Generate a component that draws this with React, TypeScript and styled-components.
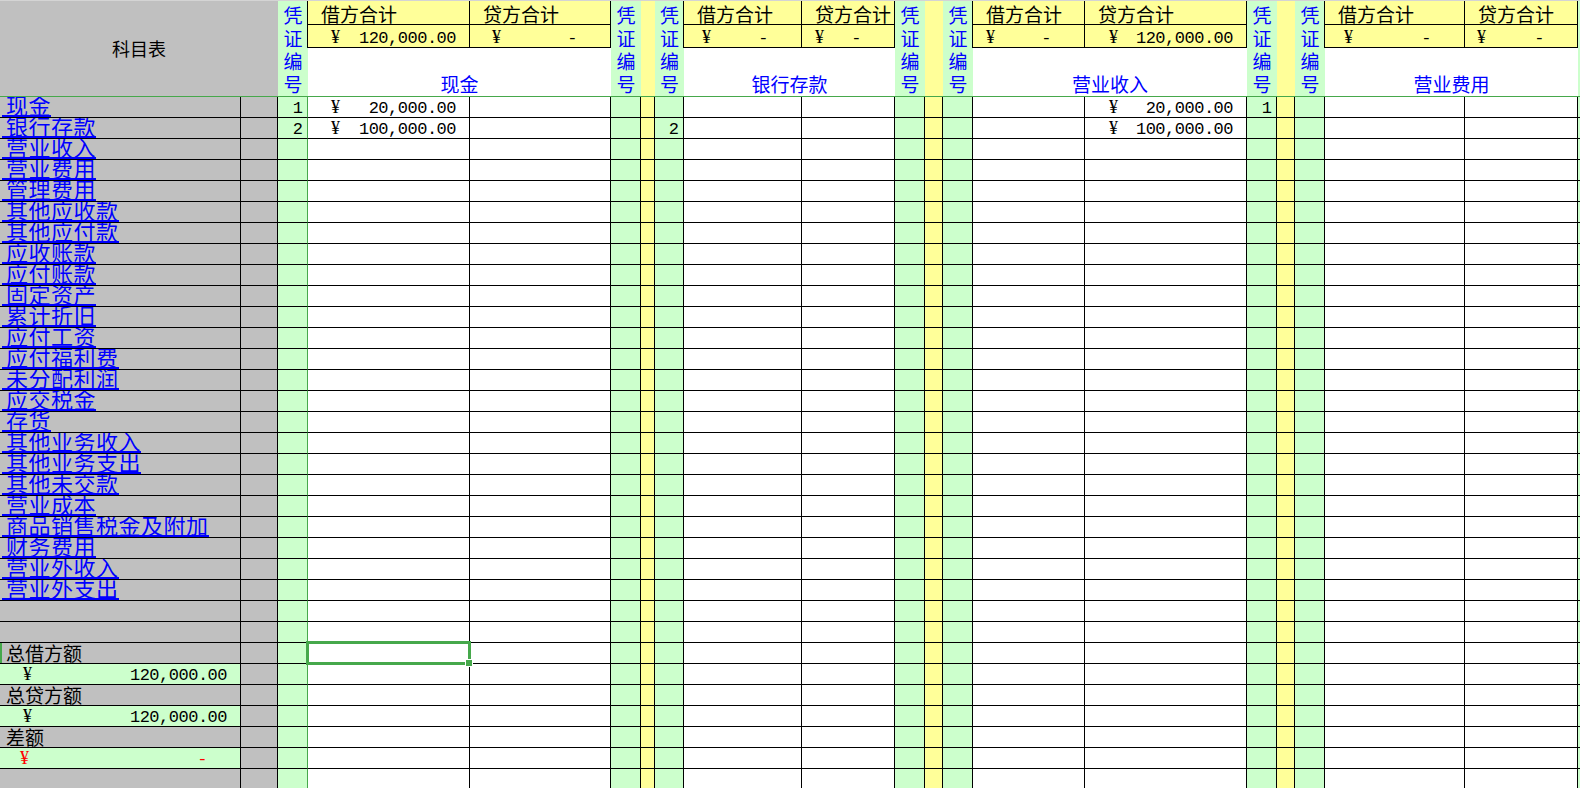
import React from "react";
import styled, { createGlobalStyle, css } from "styled-components";

const C = {
  gray: "#c0c0c0",
  green: "#ccffcc",
  yellow: "#ffff99",
  white: "#ffffff",
  line: "#000000",
  freeze: "#46a84b",
  blue: "#0000ff",
  red: "#ff0000",
  top: "#d4d4d4",
};

const CJK = `"Noto Sans CJK SC", "Noto Sans", sans-serif`;
const NUM = `"Liberation Mono", "Noto Sans CJK SC", monospace`;
const YEN = `"Liberation Serif", "Noto Sans CJK SC", serif`;

const GlobalStyle = createGlobalStyle`
  html, body { margin: 0; padding: 0; background: #ffffff; overflow: hidden; }
  body { font-family: ${CJK}; color: #000; }
`;

const COLS = [241, 37, 30, 162, 141, 30, 14, 29, 118, 93, 30, 18, 30, 112, 162, 30, 18, 30, 140, 113];
const colTemplate = COLS.map((w) => `${w}px`).join(" ") + " 1fr";

type Kind = "gray" | "green" | "yellow" | "white";
const KIND_BG: Record<Kind, string> = { gray: C.gray, green: C.green, yellow: C.yellow, white: C.white };

const BODY_KINDS: Kind[] = [
  "gray", "gray",
  "green", "white", "white", "green", "yellow",
  "green", "white", "white", "green", "yellow",
  "green", "white", "white", "green", "yellow",
  "green", "white", "white", "green",
];

const Page = styled.div`
  width: 1580px;
  height: 788px;
  overflow: hidden;
  border-top: 1px solid ${C.top};
  box-sizing: border-box;
  display: flex;
  flex-direction: column;
`;

const HeaderGrid = styled.div`
  display: grid;
  grid-template-columns: ${colTemplate};
  grid-template-rows: 24px 23px 49px;
  flex: none;
`;

const Row = styled.div`
  display: grid;
  grid-template-columns: ${colTemplate};
  height: 21px;
  flex: none;
`;

type Place = { $c: number; $cs?: number; $r: number; $rs?: number; $bg: string };

const HCell = styled.div<Place>`
  grid-column: ${(p) => p.$c} / span ${(p) => p.$cs ?? 1};
  grid-row: ${(p) => p.$r} / span ${(p) => p.$rs ?? 1};
  background: ${(p) => p.$bg};
  box-sizing: border-box;
  min-width: 0;
  display: flex;
`;

const TitleCell = styled(HCell)`
  border-bottom: 1px solid ${C.freeze};
  align-items: center;
  justify-content: center;
  font-size: 18px;
  line-height: 20px;
  padding-bottom: 2px;
`;

const VoucherHead = styled(HCell)`
  border-bottom: 1px solid ${C.freeze};
  align-items: center;
  justify-content: center;
  overflow: hidden;
`;

const VoucherLabel = styled.div`
  width: 20px;
  font-size: 19px;
  line-height: 23px;
  color: ${C.blue};
  text-align: center;
  word-break: break-all;
`;

const SpacerHead = styled(HCell)`
  border-bottom: 1px solid ${C.freeze};
`;

const TotalCell = styled(HCell)<{ $first?: boolean; $selTop?: boolean }>`
  border-right: 1px solid ${C.line};
  border-bottom: 1px solid ${C.line};
  align-items: flex-end;
  ${(p) =>
    p.$first &&
    css`
      margin-left: -1px;
      border-left: 1px solid ${C.line};
    `}
  ${(p) => p.$selTop && css`box-shadow: 0 -1px 0 ${C.freeze};`}
`;

const TotalLabel = styled.span`
  padding-left: 13px;
  font-size: 19px;
  line-height: 20px;
  white-space: nowrap;
`;

const NameCell = styled(HCell)`
  border-bottom: 1px solid ${C.freeze};
  align-items: flex-end;
  justify-content: center;
  padding-bottom: 2px;
  font-size: 19px;
  line-height: 20px;
  color: ${C.blue};
`;

const Amount = styled.div<{ $lead: number; $trail: number; $color?: string }>`
  flex: 1;
  min-width: 0;
  display: flex;
  justify-content: space-between;
  align-items: baseline;
  padding: 0 ${(p) => p.$trail}px 0 ${(p) => p.$lead}px;
  font-family: ${NUM};
  font-size: 17px;
  line-height: 16px;
  letter-spacing: -0.5px;
  color: ${(p) => p.$color ?? "#000"};
  white-space: pre;
`;

const Yen = styled.span`
  font-family: ${YEN};
  font-size: 18px;
  line-height: 16px;
  letter-spacing: 0;
`;

const BodyCell = styled.div<{ $bg: string; $edge: string | null; $sel?: boolean; $mark?: boolean; $clip?: boolean }>`
  box-sizing: border-box;
  min-width: 0;
  background: ${(p) => p.$bg};
  border-bottom: 1px solid ${C.line};
  ${(p) => p.$edge && css`border-right: 1px solid ${p.$edge};`}
  display: flex;
  align-items: flex-end;
  overflow: ${(p) => (p.$clip ? "hidden" : "visible")};
  position: ${(p) => (p.$sel ? "relative" : "static")};
  ${(p) => p.$mark && css`box-shadow: inset 2px 0 0 ${C.freeze};`}
`;

const AccountLink = styled.a`
  display: block;
  height: 18px;
  margin-left: 2px;
  padding-left: 4px;
  font-size: 22px;
  line-height: 14px;
  letter-spacing: 0.5px;
  color: ${C.blue};
  text-decoration: none;
  border-bottom: 2px solid ${C.blue};
  white-space: nowrap;
`;

const SumLabel = styled.span`
  padding-left: 6px;
  font-size: 19px;
  line-height: 20px;
  white-space: nowrap;
`;

const VoucherNum = styled.span`
  margin-left: auto;
  padding-right: 4px;
  font-family: ${NUM};
  font-size: 17px;
  line-height: 16px;
`;

const Selection = styled.div`
  position: absolute;
  top: -2px;
  left: -2px;
  right: -2px;
  bottom: -2px;
  border: 3px solid ${C.freeze};
  pointer-events: none;
`;

const FillHandle = styled.div`
  position: absolute;
  right: -5px;
  bottom: -5px;
  width: 8px;
  height: 8px;
  box-sizing: border-box;
  background: ${C.freeze};
  border: 1px solid #ffffff;
`;

function Accounting({ value, lead, color }: { value: string; lead: number; color?: string }) {
  const zero = value === "-";
  return (
    <Amount $lead={lead} $trail={zero ? 33 : 13} $color={color}>
      <Yen>¥</Yen>
      <span>{value}</span>
    </Amount>
  );
}

type Side = { value: string; lead: number };
type Block = { name: string; debit: Side; credit: Side };

const BLOCKS: Block[] = [
  { name: "现金", debit: { value: "120,000.00", lead: 23 }, credit: { value: "-", lead: 22 } },
  { name: "银行存款", debit: { value: "-", lead: 18 }, credit: { value: "-", lead: 13 } },
  { name: "营业收入", debit: { value: "-", lead: 13 }, credit: { value: "120,000.00", lead: 24 } },
  { name: "营业费用", debit: { value: "-", lead: 19 }, credit: { value: "-", lead: 12 } },
];

const ACCOUNTS = [
  "现金", "银行存款", "营业收入", "营业费用", "管理费用", "其他应收款", "其他应付款",
  "应收账款", "应付账款", "固定资产", "累计折旧", "应付工资", "应付福利费", "未分配利润",
  "应交税金", "存货", "其他业务收入", "其他业务支出", "其他未交款", "营业成本",
  "商品销售税金及附加", "财务费用", "营业外收入", "营业外支出",
];

type SummaryRow =
  | { type: "blank" }
  | { type: "label"; text: string; mark?: boolean }
  | { type: "amt"; value: string; lead: number; color?: string };

const SUMMARY: SummaryRow[] = [
  { type: "blank" },
  { type: "blank" },
  { type: "label", text: "总借方额", mark: true },
  { type: "amt", value: "120,000.00", lead: 23 },
  { type: "label", text: "总贷方额" },
  { type: "amt", value: "120,000.00", lead: 23 },
  { type: "label", text: "差额" },
  { type: "amt", value: "-", lead: 20, color: C.red },
  { type: "blank" },
];

type Entry = { kind: "num"; text: string } | { kind: "amt"; value: string; lead: number };

const BODY_DATA: Record<string, Entry> = {
  "0-2": { kind: "num", text: "1" },
  "0-3": { kind: "amt", value: "20,000.00", lead: 23 },
  "0-14": { kind: "amt", value: "20,000.00", lead: 24 },
  "0-15": { kind: "num", text: "1" },
  "1-2": { kind: "num", text: "2" },
  "1-3": { kind: "amt", value: "100,000.00", lead: 23 },
  "1-7": { kind: "num", text: "2" },
  "1-14": { kind: "amt", value: "100,000.00", lead: 24 },
};

const SELECTED = "26-3";

function Header() {
  return (
    <HeaderGrid>
      <TitleCell $c={1} $cs={2} $r={1} $rs={3} $bg={C.gray}>
        科目表
      </TitleCell>
      {BLOCKS.map((b, i) => {
        const base = 3 + i * 5;
        const last = i === BLOCKS.length - 1;
        return (
          <React.Fragment key={b.name}>
            <VoucherHead $c={base} $r={1} $rs={3} $bg={C.green}>
              <VoucherLabel>凭证编号</VoucherLabel>
            </VoucherHead>
            <TotalCell $c={base + 1} $r={1} $bg={C.yellow} $first $selTop={i === 0}>
              <TotalLabel>借方合计</TotalLabel>
            </TotalCell>
            <TotalCell $c={base + 2} $r={1} $bg={C.yellow}>
              <TotalLabel>贷方合计</TotalLabel>
            </TotalCell>
            <TotalCell $c={base + 1} $r={2} $bg={C.yellow} $first>
              <Accounting value={b.debit.value} lead={b.debit.lead} />
            </TotalCell>
            <TotalCell $c={base + 2} $r={2} $bg={C.yellow}>
              <Accounting value={b.credit.value} lead={b.credit.lead} />
            </TotalCell>
            <NameCell $c={base + 1} $cs={2} $r={3} $bg={C.white}>
              {b.name}
            </NameCell>
            {last ? (
              <SpacerHead $c={base + 3} $r={1} $rs={3} $bg={C.green} />
            ) : (
              <>
                <VoucherHead $c={base + 3} $r={1} $rs={3} $bg={C.green}>
                  <VoucherLabel>凭证编号</VoucherLabel>
                </VoucherHead>
                <SpacerHead $c={base + 4} $r={1} $rs={3} $bg={C.yellow} />
              </>
            )}
          </React.Fragment>
        );
      })}
    </HeaderGrid>
  );
}

function FirstColumn({ row }: { row: number }) {
  if (row < ACCOUNTS.length) {
    return (
      <BodyCell $bg={C.gray} $edge={C.line} $clip>
        <AccountLink href="#">{ACCOUNTS[row]}</AccountLink>
      </BodyCell>
    );
  }
  const s = SUMMARY[row - ACCOUNTS.length];
  if (s.type === "amt") {
    return (
      <BodyCell $bg={C.green} $edge={C.line}>
        <Accounting value={s.value} lead={s.lead} color={s.color} />
      </BodyCell>
    );
  }
  if (s.type === "label") {
    return (
      <BodyCell $bg={C.gray} $edge={C.line} $mark={s.mark}>
        <SumLabel>{s.text}</SumLabel>
      </BodyCell>
    );
  }
  return <BodyCell $bg={C.gray} $edge={C.line} />;
}

function BodyRow({ row }: { row: number }) {
  return (
    <Row>
      <FirstColumn row={row} />
      {BODY_KINDS.slice(1).map((kind, j) => {
        const col = j + 1;
        const key = `${row}-${col}`;
        const entry = BODY_DATA[key];
        const edge = col === 2 ? C.freeze : col === BODY_KINDS.length - 1 ? null : C.line;
        const sel = key === SELECTED;
        return (
          <BodyCell key={col} $bg={KIND_BG[kind]} $edge={edge} $sel={sel}>
            {entry?.kind === "num" && <VoucherNum>{entry.text}</VoucherNum>}
            {entry?.kind === "amt" && <Accounting value={entry.value} lead={entry.lead} />}
            {sel && (
              <Selection>
                <FillHandle />
              </Selection>
            )}
          </BodyCell>
        );
      })}
    </Row>
  );
}

export default function App() {
  const rows = Array.from({ length: ACCOUNTS.length + SUMMARY.length }, (_, i) => i);
  return (
    <>
      <GlobalStyle />
      <Page>
        <Header />
        {rows.map((r) => (
          <BodyRow key={r} row={r} />
        ))}
      </Page>
    </>
  );
}
